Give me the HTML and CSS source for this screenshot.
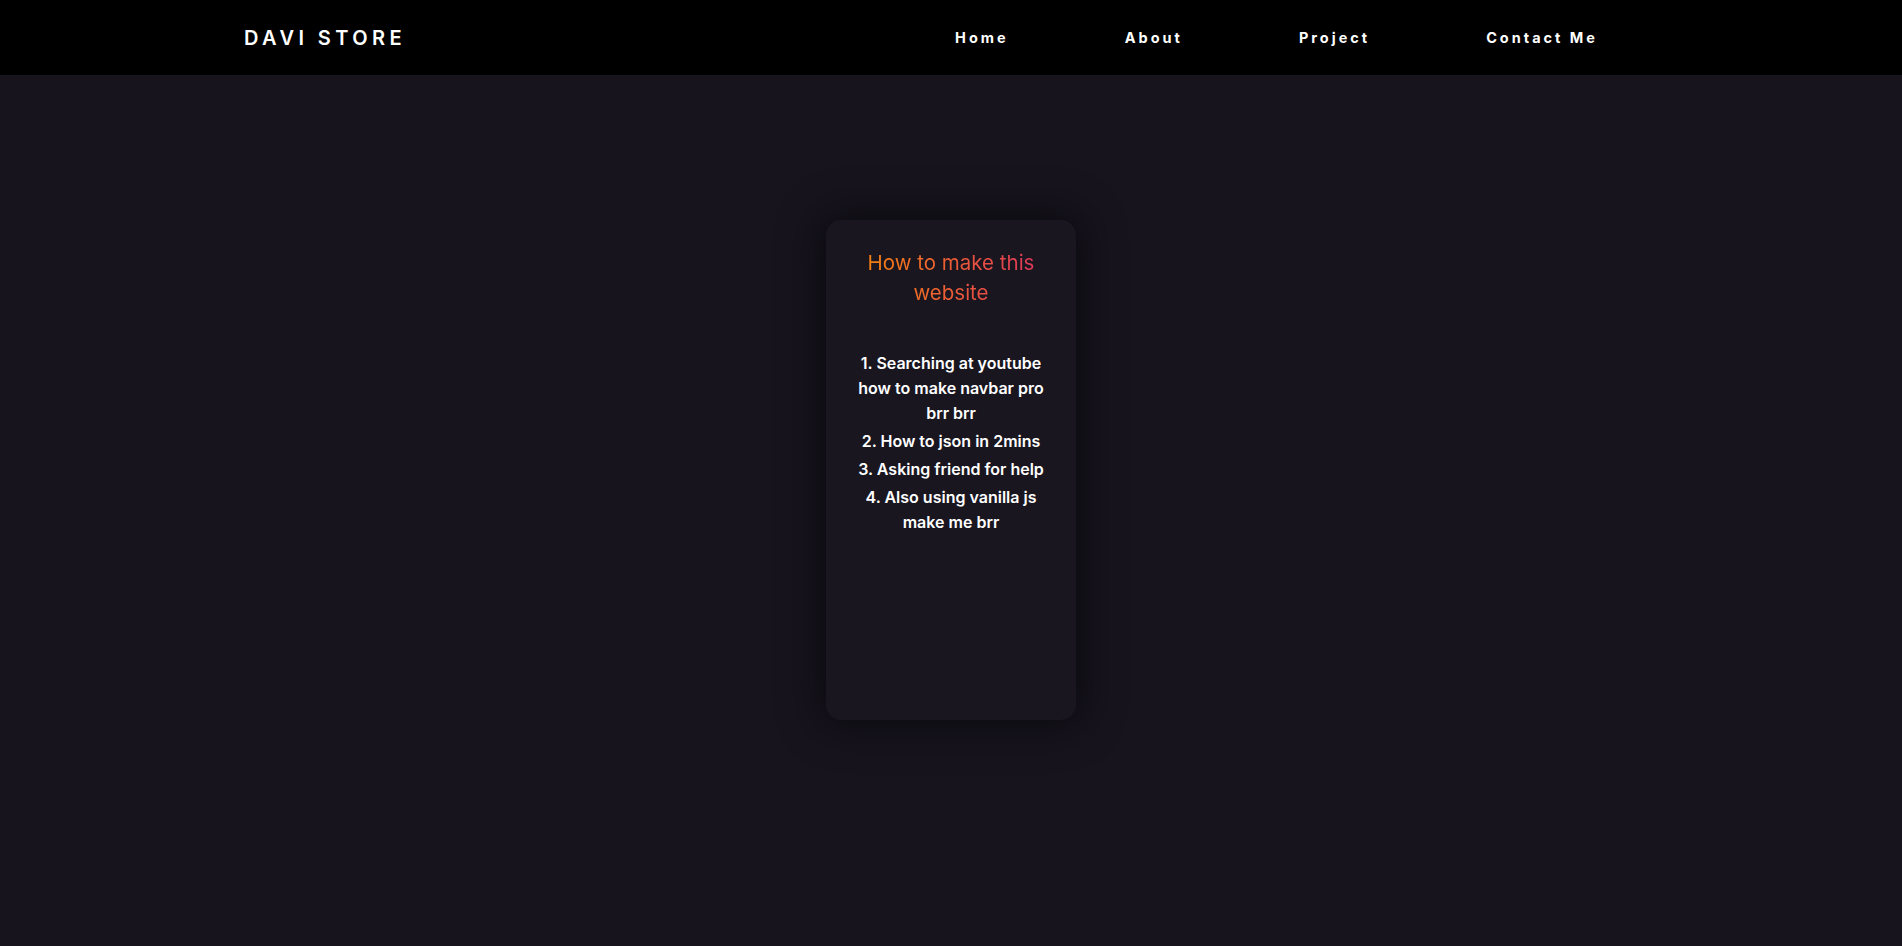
FILE: index.html
```html
<!DOCTYPE html>
<html lang="en">
<head>
<meta charset="utf-8">
<title>Davi Store</title>
<link rel="stylesheet" href="styles.css">
</head>
<body>
<header class="navbar">
  <div class="logo">DAVI STORE</div>
  <nav class="menu">
    <a class="menu-link" href="#">Home</a>
    <a class="menu-link" href="#">About</a>
    <a class="menu-link" href="#">Project</a>
    <a class="menu-link" href="#">Contact Me</a>
  </nav>
</header>
<main class="main">
  <section class="card">
    <h2 class="card-title">How to make this website</h2>
    <ol class="steps">
      <li class="step">1. Searching at youtube how to make navbar pro brr brr</li>
      <li class="step">2. How to json in 2mins</li>
      <li class="step">3. Asking friend for help</li>
      <li class="step">4. Also using vanilla js make me brr</li>
    </ol>
  </section>
</main>
</body>
</html>
```
FILE: styles.css
```css
* { box-sizing: border-box; }
html, body { margin: 0; padding: 0; }
body {
  background: #17141e;
  font-family: "Inter", "Noto Sans", sans-serif;
  color: #fff;
  min-height: 946px;
}
.navbar {
  height: 75px;
  background: #000;
  display: flex;
  align-items: center;
  padding-left: 244px;
  padding-right: 304px;
}
.logo {
  font-size: 20px;
  font-weight: 600;
  letter-spacing: 4.4px;
  color: #fff;
}
.menu {
  margin-left: auto;
  display: flex;
  gap: 116px;
}
.menu-link {
  color: #fff;
  text-decoration: none;
  font-size: 14.5px;
  font-weight: 700;
  letter-spacing: 3px;
}
.main {
  display: flex;
  justify-content: center;
  padding-top: 145px;
}
.card {
  width: 250px;
  height: 500px;
  background: #19161f;
  border-radius: 15px;
  box-shadow: 0 0 40px 10px rgba(0, 0, 0, 0.45);
  padding: 28px 20px;
  text-align: center;
}
.card-title {
  margin: 0;
  font-size: 20.5px;
  font-weight: 400;
  line-height: 30px;
  background: linear-gradient(90deg, #f98a0a, #de2f62);
  -webkit-background-clip: text;
  background-clip: text;
  color: transparent;
}
.steps {
  list-style: none;
  margin: 43px 0 0;
  padding: 0;
}
.step {
  font-size: 16px;
  font-weight: 600;
  line-height: 25px;
  margin-bottom: 3px;
}
```
